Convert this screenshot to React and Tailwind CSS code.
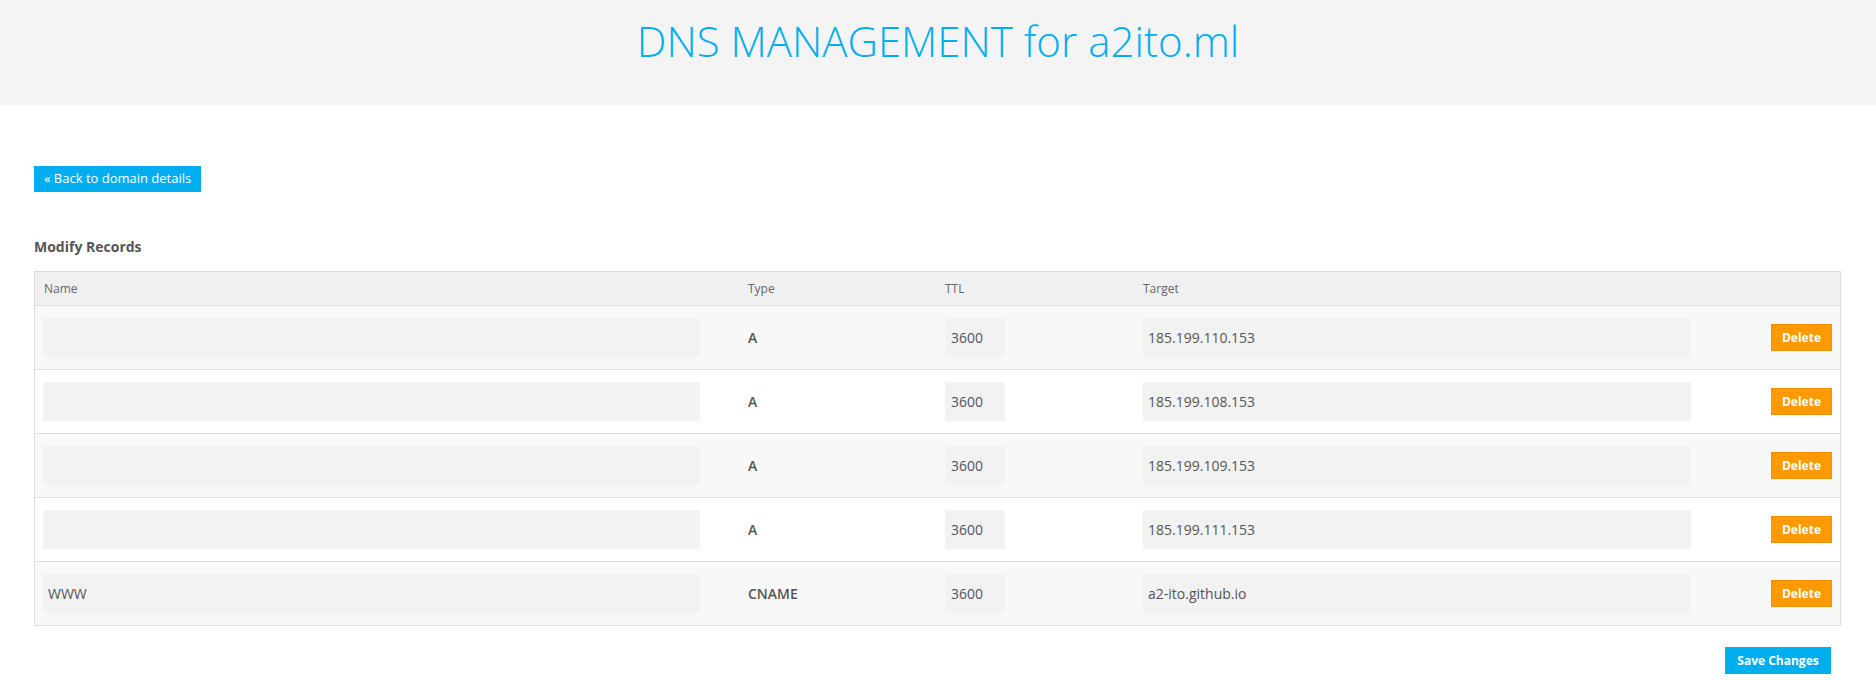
import React from "react"

const records = [
  { name: "", type: "A", ttl: "3600", target: "185.199.110.153" },
  { name: "", type: "A", ttl: "3600", target: "185.199.108.153" },
  { name: "", type: "A", ttl: "3600", target: "185.199.109.153" },
  { name: "", type: "A", ttl: "3600", target: "185.199.111.153" },
  { name: "WWW", type: "CNAME", ttl: "3600", target: "a2-ito.github.io" },
]

const cols = "grid grid-cols-[705px_197px_198px_1fr_77px]"

const RecordRow = ({ rec, striped }) => (
  <div className={`${cols} items-center border-t border-[#dddddd] py-[12px] ${striped ? "bg-[#f8f8f8]" : "bg-white"}`}>
    <div className="px-[8px]">
      <input
        type="text"
        defaultValue={rec.name}
        className="w-[657px] h-[39px] bg-[#f2f2f2] px-[5px] text-[14px] text-[#555] outline-none"
      />
    </div>
    <div className="px-[8px] text-[14px] font-semibold text-[#555]">{rec.type}</div>
    <div className="px-[8px]">
      <input
        type="text"
        defaultValue={rec.ttl}
        className="w-[60px] h-[39px] bg-[#f2f2f2] px-[6px] text-[14px] text-[#555] outline-none"
      />
    </div>
    <div className="px-[8px]">
      <input
        type="text"
        defaultValue={rec.target}
        className="w-[548px] h-[39px] bg-[#f2f2f2] px-[5px] text-[14px] text-[#555] outline-none"
      />
    </div>
    <div className="flex justify-end pr-[8px]">
      <button className="h-[27px] w-[61px] bg-[#ff9900] border border-[#f39200] text-white text-[12px] font-bold">
        Delete
      </button>
    </div>
  </div>
)

export default function App() {
  return (
    <div className="min-h-[680px] bg-white font-['Open_Sans',sans-serif]">
      <div className="h-[105px] bg-[#f4f4f4] pt-[12px]">
        <h1 className="text-center text-[42px] leading-[57px] font-light text-[#00aeef]">
          DNS MANAGEMENT for a2ito.ml
        </h1>
      </div>

      <div className="pl-[34px] pr-[35px]">
        <button className="mt-[61px] h-[26px] px-[10px] bg-[#00aeef] text-white text-[13px]">
          « Back to domain details
        </button>

        <h2 className="mt-[45px] text-[14px] leading-[20px] font-bold text-[#555]">Modify Records</h2>

        <div className="mt-[14px] border border-[#dddddd]">
          <div className={`${cols} h-[33px] items-center bg-[#f0f0f0] text-[12px] text-[#666]`}>
            <div className="px-[9px]">Name</div>
            <div className="px-[8px]">Type</div>
            <div className="px-[8px]">TTL</div>
            <div className="px-[8px]">Target</div>
            <div />
          </div>
          {records.map((rec, i) => (
            <RecordRow key={i} rec={rec} striped={i % 2 === 0} />
          ))}
        </div>

        <div className="mt-[21px] flex justify-end pr-[10px]">
          <button className="h-[27px] w-[106px] bg-[#00aeef] text-white text-[12px] font-bold">
            Save Changes
          </button>
        </div>
      </div>
    </div>
  )
}
